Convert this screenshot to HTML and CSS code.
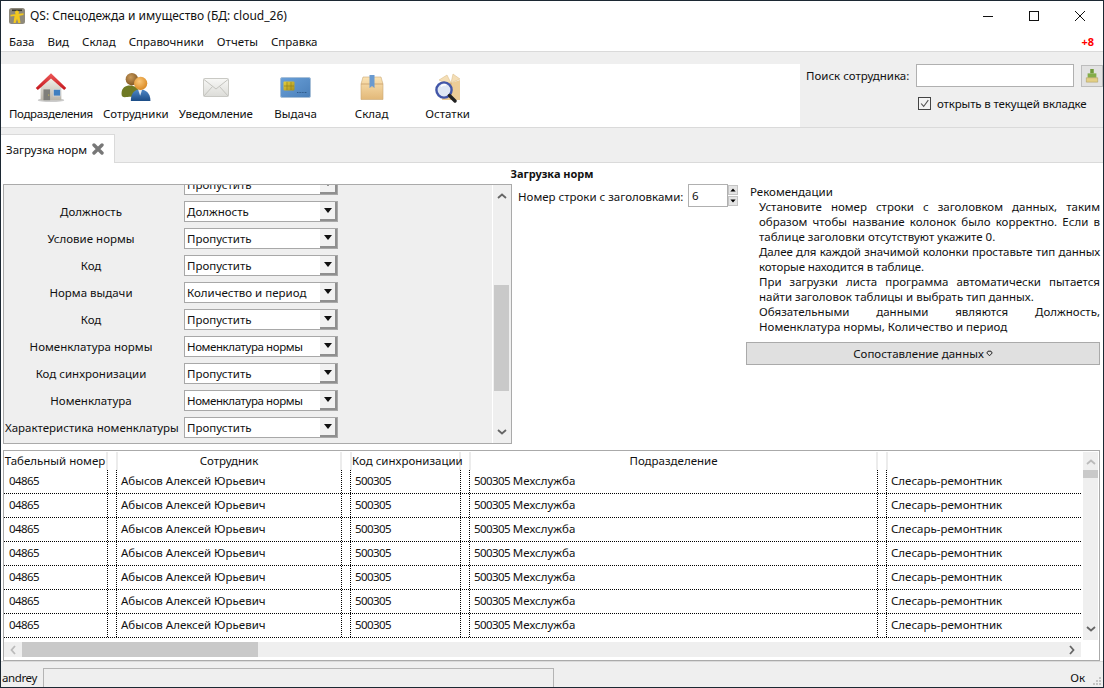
FILE: index.html
```html
<!DOCTYPE html>
<html lang="ru">
<head>
<meta charset="utf-8">
<title>QS: Спецодежда и имущество</title>
<link rel="stylesheet" href="styles.css">
</head>
<body>
<div class="window">
  <header class="titlebar">
    <svg class="appicon" viewBox="0 0 16 16"><rect width="16" height="16" rx="2.500" fill="#8f8a7c"/><path d="M3 1.500h10v1.600H3Z" fill="#3a3a30"/><circle cx="8" cy="4.600" r="2" fill="#f2c81e"/><path d="M1.500 6.800 8 6 14.500 5.200 14.500 7 10.500 7.800 11.500 15 9.300 15 8 10.800 6.700 15 4.500 15 5.500 8 1.500 8.400Z" fill="#f2c81e"/></svg>
    <span class="title-text">QS: Спецодежда и имущество (БД: cloud_26)</span>
    <div class="winctl">
      <svg viewBox="0 0 12 12"><path d="M1 6.500h10" stroke="#111" fill="none"/></svg>
      <svg viewBox="0 0 12 12"><rect x="1.500" y="1.500" width="9" height="9" stroke="#111" fill="none"/></svg>
      <svg viewBox="0 0 12 12"><path d="M1 1l10 10M11 1 1 11" stroke="#111" fill="none"/></svg>
    </div>
  </header>
  <nav class="menubar">
    <span>База</span><span>Вид</span><span>Склад</span><span>Справочники</span><span>Отчеты</span><span>Справка</span>
    <b class="counter">+8</b>
  </nav>
  <section class="topband">
    <div class="toolbar">
      <div class="tool tight">
        <svg viewBox="0 0 34 32" class="ico"><defs><linearGradient id="wall" x1="0" y1="0" x2="0" y2="1"><stop offset="0" stop-color="#f4f2ec"/><stop offset="1" stop-color="#b9b5aa"/></linearGradient><linearGradient id="roof" x1="0" y1="0" x2="0" y2="1"><stop offset="0" stop-color="#ee5a5a"/><stop offset="1" stop-color="#c4161c"/></linearGradient></defs><ellipse cx="17" cy="29.500" rx="14" ry="2" fill="#ccc"/><path d="M6 14 17 5l11 9v15.500H6Z" fill="url(#wall)"/><path d="M.8 16.500 17 .8 33.200 16.500 31 18.600 17 6.500 3 18.600Z" fill="url(#roof)"/><rect x="9" y="18" width="7" height="11.500" fill="#7f7f7a"/><circle cx="14.600" cy="24" r=".6" fill="#e8d24a"/><rect x="19.500" y="18" width="7.500" height="7" fill="#3f7fc0" stroke="#d8d8d8" stroke-width=".7"/></svg>
        <span>Подразделения</span>
      </div>
      <div class="tool">
        <svg viewBox="0 0 30 30" class="ico"><defs><radialGradient id="h1" cx=".4" cy=".35" r=".7"><stop offset="0" stop-color="#c99a5a"/><stop offset="1" stop-color="#7d5320"/></radialGradient><radialGradient id="h2" cx=".4" cy=".35" r=".7"><stop offset="0" stop-color="#fbc879"/><stop offset="1" stop-color="#d8861f"/></radialGradient><linearGradient id="b2" x1="0" y1="0" x2="0" y2="1"><stop offset="0" stop-color="#4f88c8"/><stop offset="1" stop-color="#1c4c86"/></linearGradient></defs><path d="M1 21c0-6 4-8 8-8s9 2 9 8-3 3-8 3-9 2-9-3Z" fill="#6f7a24"/><circle cx="11" cy="7" r="6" fill="url(#h1)"/><path d="M10 29c0-8 4-11 9-11s10 3 10 11Z" fill="url(#b2)" transform="translate(0 -1)"/><path d="M17 17h4l-2 6Z" fill="#e8eef4"/><circle cx="19.500" cy="11" r="6.400" fill="url(#h2)"/></svg>
        <span>Сотрудники</span>
      </div>
      <div class="tool tighter">
        <svg viewBox="0 0 26 20" class="ico env"><defs><linearGradient id="en" x1="0" y1="0" x2="0" y2="1"><stop offset="0" stop-color="#f8f8f6"/><stop offset="1" stop-color="#dcdcd8"/></linearGradient></defs><rect x=".5" y=".5" width="25" height="18" rx="1" fill="url(#en)" stroke="#c9c9c4"/><path d="M1 1.500 13 11 25 1.500M1 18 9.500 8.500M25 18 16.500 8.500" fill="none" stroke="#c4c4bf"/></svg>
        <span>Уведомление</span>
      </div>
      <div class="tool">
        <svg viewBox="0 0 31 21" class="ico card"><defs><linearGradient id="cd" x1="0" y1="0" x2="1" y2="1"><stop offset="0" stop-color="#6aa0d8"/><stop offset="1" stop-color="#4a7fb9"/></linearGradient><linearGradient id="ch" x1="0" y1="0" x2="1" y2="1"><stop offset="0" stop-color="#e6cf3c"/><stop offset="1" stop-color="#a8901c"/></linearGradient></defs><rect x=".5" y=".5" width="30" height="20" rx="1.500" fill="url(#cd)" stroke="#a8c0d8"/><rect x="3.500" y="4.500" width="11" height="9" rx="1" fill="url(#ch)"/><path d="M7 5v8M11 5v8M4 9h10" stroke="#8c7a18" stroke-width=".6"/><path d="M17 15.500h10" stroke="#2f5a88" stroke-dasharray="1 .6"/></svg>
        <span>Выдача</span>
      </div>
      <div class="tool">
        <svg viewBox="0 0 24 26" class="ico box"><defs><linearGradient id="bx" x1="0" y1="0" x2="0" y2="1"><stop offset="0" stop-color="#fbe3b4"/><stop offset="1" stop-color="#e2b878"/></linearGradient></defs><path d="M3 2h18l2 7v15.500H1V9Z" fill="url(#bx)" stroke="#c9a977" stroke-width=".6"/><path d="M1 9h22" stroke="#c9a06a" stroke-width=".8"/><rect x="9.500" y="0" width="5" height="13" fill="#6a9ad0"/><path d="M9.500 13l2.500-2 2.500 2" fill="#e8c690"/></svg>
        <span>Склад</span>
      </div>
      <div class="tool">
        <svg viewBox="0 0 28 30" class="ico search"><path d="M8 7 17 10l9-3v20H8Z" fill="#edcd97"/><path d="M5 7 13 2l4 8-8-1ZM17 10l2-9 7 5Z" fill="#f4deb6" stroke="#d6b680" stroke-width=".5"/><path d="M17 10v17" stroke="#cfa96f"/><circle cx="10" cy="17" r="7.600" fill="#dfe7f4" stroke="#4256a8" stroke-width="2.400"/><path d="M7 13.500a5 5 0 0 1 5-1.500" stroke="#fff" stroke-width="1.500" fill="none"/><path d="M15.500 22.500 21 28" stroke="#222" stroke-width="3.400" stroke-linecap="round"/></svg>
        <span>Остатки</span>
      </div>
    </div>
    <div class="searchpanel">
      <div class="searchline">
        <label class="searchlabel">Поиск сотрудника:</label>
        <div class="searchinput"></div>
        <div class="brushbtn"><svg viewBox="0 0 16 18"><rect x="6" y="1" width="4" height="5" fill="#6f9a3a"/><path d="M3 6h10v5H3Z" fill="#84ad48"/><path d="M1.500 11h13v5h-13Z" fill="#e3cf85" stroke="#a99a5c" stroke-width=".6"/></svg></div>
      </div>
      <div class="checkline">
        <span class="check"><svg viewBox="0 0 13 13"><path d="M2.500 6.500 5.500 10 11 2.500" fill="none" stroke="#555" stroke-width="1.300"/></svg></span>
        <span class="checktext">открыть в текущей вкладке</span>
      </div>
    </div>
  </section>
  <div class="tabbar">
    <div class="tab">
      <span>Загрузка норм</span>
      <svg viewBox="0 0 12 12"><path d="M2 2l8 8M10 2 2 10" stroke="#777" stroke-width="3.400" stroke-linecap="round"/></svg>
    </div>
  </div>
  <main class="page">
    <h1 class="pagetitle">Загрузка норм</h1>
    <div class="upper">
      <div class="formscroll">
        <div class="formclip">
          <div class="formrows">
            <div class="frow"><label></label><div class="combo"><span>Пропустить</span><i></i></div></div>
            <div class="frow"><label>Должность</label><div class="combo"><span>Должность</span><i></i></div></div>
            <div class="frow"><label>Условие нормы</label><div class="combo"><span>Пропустить</span><i></i></div></div>
            <div class="frow"><label>Код</label><div class="combo"><span>Пропустить</span><i></i></div></div>
            <div class="frow"><label>Норма выдачи</label><div class="combo"><span>Количество и период</span><i></i></div></div>
            <div class="frow"><label>Код</label><div class="combo"><span>Пропустить</span><i></i></div></div>
            <div class="frow"><label>Номенклатура нормы</label><div class="combo"><span class="narrow">Номенклатура нормы</span><i></i></div></div>
            <div class="frow"><label>Код синхронизации</label><div class="combo"><span>Пропустить</span><i></i></div></div>
            <div class="frow"><label>Номенклатура</label><div class="combo"><span class="narrow">Номенклатура нормы</span><i></i></div></div>
            <div class="frow"><label>Характеристика номенклатуры</label><div class="combo"><span>Пропустить</span><i></i></div></div>
          </div>
        </div>
        <div class="vscroll form-v">
          <svg class="arr" viewBox="0 0 10 6"><path d="M1 5l4-3.500L9 5" fill="none" stroke="#666" stroke-width="1.800"/></svg>
          <div class="vtrack"><div class="thumb-form"></div></div>
          <svg class="arr" viewBox="0 0 10 6"><path d="M1 1l4 3.500L9 1" fill="none" stroke="#666" stroke-width="1.800"/></svg>
        </div>
      </div>
      <div class="spinrow">
        <span>Номер строки с заголовками:</span>
        <div class="spinbox">6</div>
        <div class="spinbtns">
          <b><svg viewBox="0 0 8 5"><path d="M4 .5 7.500 4.500h-7Z"/></svg></b>
          <b><svg viewBox="0 0 8 5"><path d="M4 4.500 7.500 .5h-7Z"/></svg></b>
        </div>
      </div>
      <aside class="recs">
        <div class="rectitle">Рекомендации</div>
        <div class="rectext">
          <p>Установите номер строки с заголовком данных, таким образом чтобы название колонок было корректно. Если в таблице заголовки отсутствуют укажите 0.</p>
          <p class="fit">Далее для каждой значимой колонки проставьте тип данных которые находится в таблице.</p>
          <p>При загрузки листа программа автоматически пытается найти заголовок таблицы и выбрать тип данных.</p>
          <p>Обязательными данными являются Должность, Номенклатура нормы, Количество и период</p>
        </div>
        <button class="mapbtn">Сопоставление данных<svg viewBox="0 0 7 7"><path d="M.8 3 3.500 5.800 6.200 3 5 1.200H2Z" fill="none" stroke="#222"/></svg></button>
      </aside>
    </div>
    <div class="tablebox">
      <div class="tablemain">
        <div class="tablearea">
          <div class="thead">
            <div class="th c1">Табельный номер</div>
            <div class="th c2">Сотрудник</div>
            <div class="th c3">Код синхронизации</div>
            <div class="th c4">Подразделение</div>
            <div class="th c5"></div>
          </div>
          <div class="tr"><div class="td c1 num">04865</div><div class="td c2">Абысов Алексей Юрьевич</div><div class="td c3 num">500305</div><div class="td c4"><span class="num">500305</span> Мехслужба</div><div class="td c5">Слесарь-ремонтник</div></div>
          <div class="tr"><div class="td c1 num">04865</div><div class="td c2">Абысов Алексей Юрьевич</div><div class="td c3 num">500305</div><div class="td c4"><span class="num">500305</span> Мехслужба</div><div class="td c5">Слесарь-ремонтник</div></div>
          <div class="tr"><div class="td c1 num">04865</div><div class="td c2">Абысов Алексей Юрьевич</div><div class="td c3 num">500305</div><div class="td c4"><span class="num">500305</span> Мехслужба</div><div class="td c5">Слесарь-ремонтник</div></div>
          <div class="tr"><div class="td c1 num">04865</div><div class="td c2">Абысов Алексей Юрьевич</div><div class="td c3 num">500305</div><div class="td c4"><span class="num">500305</span> Мехслужба</div><div class="td c5">Слесарь-ремонтник</div></div>
          <div class="tr"><div class="td c1 num">04865</div><div class="td c2">Абысов Алексей Юрьевич</div><div class="td c3 num">500305</div><div class="td c4"><span class="num">500305</span> Мехслужба</div><div class="td c5">Слесарь-ремонтник</div></div>
          <div class="tr"><div class="td c1 num">04865</div><div class="td c2">Абысов Алексей Юрьевич</div><div class="td c3 num">500305</div><div class="td c4"><span class="num">500305</span> Мехслужба</div><div class="td c5">Слесарь-ремонтник</div></div>
          <div class="tr"><div class="td c1 num">04865</div><div class="td c2">Абысов Алексей Юрьевич</div><div class="td c3 num">500305</div><div class="td c4"><span class="num">500305</span> Мехслужба</div><div class="td c5">Слесарь-ремонтник</div></div>
        </div>
        <div class="vscroll table-v">
          <svg class="arr" viewBox="0 0 10 6"><path d="M1 5l4-3.500L9 5" fill="none" stroke="#bbb" stroke-width="1.800"/></svg>
          <div class="vtrack"><div class="thumb-table"></div></div>
          <svg class="arr" viewBox="0 0 10 6"><path d="M1 1l4 3.500L9 1" fill="none" stroke="#666" stroke-width="1.800"/></svg>
        </div>
      </div>
      <div class="hscroll">
        <svg class="arrh" viewBox="0 0 6 10"><path d="M5 1 1.500 5 5 9" fill="none" stroke="#bbb" stroke-width="1.800"/></svg>
        <div class="hthumb"></div>
        <svg class="arrh right" viewBox="0 0 6 10"><path d="M1 1l3.500 4L1 9" fill="none" stroke="#666" stroke-width="1.800"/></svg>
      </div>
    </div>
  </main>
  <footer class="statusbar">
    <span class="user">andrey</span>
    <div class="statusfield"></div>
    <span class="ok">Ок</span>
    <svg class="grip" viewBox="0 0 8 8"><path d="M6 0h2v2H6zM3 3h2v2H3zM6 3h2v2H6zM0 6h2v2H0zM3 6h2v2H3zM6 6h2v2H6z" fill="#c4c4c4"/></svg>
  </footer>
</div>
</body>
</html>
```

FILE: styles.css
```css
* { box-sizing: border-box; }
html, body { margin: 0; padding: 0; }
body { width: 1104px; height: 688px; overflow: hidden; font: 11.5px/15px "Noto Sans", sans-serif; color: #111; }
.window { width: 1104px; height: 688px; display: flex; flex-direction: column; background: #fff; border: 1px solid #1c2833; overflow: hidden; }

.titlebar { height: 29px; flex: none; display: flex; align-items: center; padding-left: 8px; font-size: 12px; }
.appicon { width: 16px; height: 16px; }
.title-text { margin-left: 5px; }
.winctl { margin-left: auto; display: flex; gap: 34px; padding-right: 17px; }
.winctl svg { width: 12px; height: 12px; display: block; }

.menubar { height: 22px; flex: none; display: flex; align-items: center; gap: 13px; padding: 2px 8px 0; border-bottom: 1px solid #dadada; }
.counter { margin-left: auto; color: #f00; padding-right: 1px; font-weight: 700; font-size: 11px; }

.topband { height: 76px; flex: none; display: flex; background: #efefef; padding-top: 12px; border-bottom: 1px solid #dadada; }
.toolbar { width: 799px; height: 63px; background: #fff; display: flex; padding-left: 3px; }
.tool { min-width: 76px; padding: 0 5px; display: flex; flex-direction: column; align-items: center; }
.tool span { margin-top: auto; padding-bottom: 6px; white-space: nowrap; }
.tool.tight span { letter-spacing: -.35px; }
.tool.tighter span { letter-spacing: -.2px; }
.ico { width: 32px; height: 31px; margin-top: 8px; flex: none; }
.tool .env { width: 26px; height: 20px; margin-top: 14px; }
.tool .card { width: 31px; height: 21px; margin-top: 13px; }
.tool .box { width: 24px; height: 26px; margin-top: 11px; }
.tool .search { width: 28px; height: 30px; margin-top: 9px; }

.searchpanel { flex: 1; padding-left: 6px; }
.searchline { display: flex; align-items: center; }
.searchlabel { width: 110px; }
.searchinput { width: 158px; height: 23px; background: #fff; border: 1px solid #b0b0b0; }
.brushbtn { width: 22px; height: 22px; margin-left: 7px; background: #e2e2e2; border: 1px solid #bdbdbd; display: flex; align-items: center; justify-content: center; }
.brushbtn svg { width: 14px; height: 16px; }
.checkline { display: flex; align-items: center; gap: 6px; margin: 9px 0 0 112px; white-space: nowrap; }
.checktext { letter-spacing: -.15px; }
.check { width: 13px; height: 13px; border: 1px solid #444; background: #f4f4f4; display: block; }
.check svg { width: 11px; height: 11px; display: block; }

.tabbar { height: 35px; flex: none; background: #efefef; padding-top: 6px; border-bottom: 1px solid #dadada; }
.tab { width: 114px; height: 29px; background: #fff; border: 1px solid #dadada; border-bottom: 0; border-left: 0; display: flex; align-items: center; padding-left: 5px; gap: 5px; }
.tab svg { width: 12px; height: 12px; }

.page { flex: 1; min-height: 0; display: flex; flex-direction: column; padding: 0 2px; }
.pagetitle { margin: 0; height: 21px; font-size: 11px; line-height: 21px; font-weight: 700; text-align: center; flex: none; }
.upper { display: flex; height: 265px; flex: none; align-items: flex-start; }

.formscroll { width: 509px; height: 260px; flex: none; display: flex; background: #efefef; border: 1px solid #aaa; }
.formclip { flex: 1; overflow: hidden; }
.formrows { margin-top: -11px; padding-left: 1px; display: flex; flex-direction: column; gap: 6px; }
.frow { display: flex; align-items: center; height: 21px; gap: 7px; }
.frow label { width: 172px; text-align: center; white-space: nowrap; }
.combo { width: 154px; height: 21px; flex: none; background: #fff; border: 1px solid #a8a8a8; display: flex; align-items: center; padding-left: 2px; }
.combo span { flex: 1; }
.combo .narrow { letter-spacing: -.4px; }
.combo i { width: 17px; height: 19px; background: #f2f2f2; border-right: 2px solid #8f8f8f; border-bottom: 2px solid #8f8f8f; display: flex; align-items: center; justify-content: center; }
.combo i::after { content: ""; border: 4px solid transparent; border-top: 5px solid #111; border-bottom: 0; }

.vscroll { width: 17px; flex: none; display: flex; flex-direction: column; align-items: center; background: #efefef; }
.form-v { width: 19px; border-left: 1px solid #fff; }
.arr { width: 10px; height: 6px; flex: none; margin: 8px 0; }
.vtrack { flex: 1; width: 100%; position: relative; }
.thumb-form { position: absolute; left: 1px; right: 2px; top: 78px; height: 106px; background: #c9c9c9; }
.thumb-table { position: absolute; left: 0; right: 0; top: 0; height: 8px; background: #c9c9c9; }

.spinrow { display: flex; align-items: flex-start; margin-left: 6px; width: 220px; flex: none; }
.spinrow > span { margin-top: 5px; white-space: nowrap; width: 170px; }
.spinbox { width: 40px; height: 23px; border: 1px solid #b0b0b0; padding: 3px 0 0 3px; }
.spinbtns { display: flex; flex-direction: column; gap: 1px; padding-top: 1px; }
.spinbtns b { width: 10px; height: 10px; background: #e4e4e4; border: 1px solid #c4c4c4; display: flex; align-items: center; justify-content: center; }
.spinbtns svg { width: 6px; height: 4px; display: block; }

.recs { width: 354px; flex: none; margin-left: 8px; }
.rectitle { margin-left: 4px; }
.rectext { padding-left: 13px; text-align: justify; }
.rectext p { margin: 0; }
.rectext .fit { letter-spacing: -.12px; }
.mapbtn { display: flex; align-items: center; justify-content: center; gap: 2px; width: 354px; height: 23px; margin-top: 8px; background: #e0e0e0; border: 1px solid #aaa; padding: 0; font: inherit; color: #111; }
.mapbtn svg { width: 7px; height: 7px; }

.tablebox { height: 211px; flex: none; border: 1px solid #aaa; display: flex; flex-direction: column; margin-right: 1px; margin-top: 1px; }
.tablemain { display: flex; height: 189px; padding-top: 1px; flex: none; overflow: hidden; }
.tablearea { width: 1079px; flex: none; overflow: hidden; }
.table-v { width: 15px; }
.table-v .arr:first-child { margin: 7px 0 5px; }
.thead { display: flex; height: 18px; }
.th { text-align: center; white-space: nowrap; line-height: 18px; border-right: 2px solid #ececec; border-left: 2px solid #ececec; }
.th.c1 { border-left: 0; }
.th.c5 { border-right: 0; }
.tr { display: flex; height: 24px; border-bottom: 1px dotted #000; width: 1077px; }
.td { white-space: nowrap; padding: 3px 0 0 4px; border-right: 1px dotted #000; border-left: 1px dotted #000; }
.td.c1 { border-left: 0; padding-left: 5px; }
.td.c5 { border-right: 0; }
.num { letter-spacing: -.6px; }
.c1 { width: 104px; }
.c2 { width: 226px; margin-left: 8px; }
.c3 { width: 111px; margin-left: 8px; }
.c4 { width: 409px; margin-left: 8px; }
.c5 { width: 190px; margin-left: 8px; }

.hscroll { height: 15px; flex: none; margin-top: 2px; width: 1077px; background: #efefef; display: flex; align-items: center; }
.arrh { width: 6px; height: 10px; margin-left: 6px; flex: none; }
.hthumb { width: 236px; height: 15px; margin-left: 6px; background: #c9c9c9; }
.arrh.right { margin-left: auto; margin-right: 6px; }

.statusbar { height: 26px; flex: none; background: #efefef; border-top: 1px solid #dadada; display: flex; padding-left: 1px; position: relative; }
.user { margin-top: 8px; width: 41px; letter-spacing: -.4px; }
.statusfield { width: 511px; margin-top: 6px; border: 1px solid #b4b4b4; border-bottom: 0; }
.ok { margin: 8px 0 0 auto; padding-right: 18px; }
.grip { position: absolute; right: 2px; bottom: 2px; width: 8px; height: 8px; }
```
